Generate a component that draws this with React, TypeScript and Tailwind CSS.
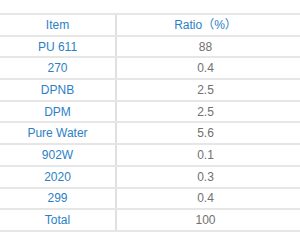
import React from 'react';

const rows: [string, string][] = [
  ['PU 611', '88'],
  ['270', '0.4'],
  ['DPNB', '2.5'],
  ['DPM', '2.5'],
  ['Pure Water', '5.6'],
  ['902W', '0.1'],
  ['2020', '0.3'],
  ['299', '0.4'],
  ['Total', '100'],
];

export default function App() {
  return (
    <div className="w-[300px] h-[245px] bg-white pt-[13px] font-['Liberation_Sans','Noto_Sans_CJK_SC',sans-serif] text-[12px]">
      <div className="border-t-2 border-[#e6e6e6]">
        <div className="flex h-[21.7px] border-b-2 border-[#e6e6e6]">
          <div className="w-[117px] flex items-center justify-center text-[#2b7fc6] border-r-2 border-[#e0e0e0]">Item</div>
          <div className="flex-1 flex items-center justify-center text-[#2b7fc6] pr-[6px]">Ratio（%）</div>
        </div>
        {rows.map(([item, ratio]) => (
          <div key={item} className="flex h-[21.7px] border-b-2 border-[#e6e6e6]">
            <div className="w-[117px] flex items-center justify-center text-[#2b7fc6] border-r-2 border-[#e0e0e0]">{item}</div>
            <div className="flex-1 flex items-center justify-center text-[#707070] pr-[6px]">{ratio}</div>
          </div>
        ))}
      </div>
    </div>
  );
}
